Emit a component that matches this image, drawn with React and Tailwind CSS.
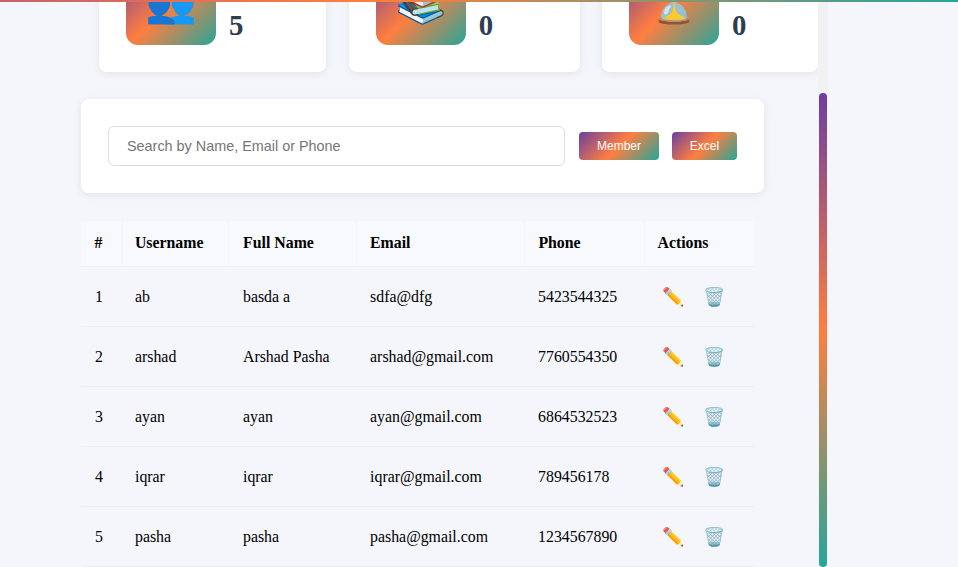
import React from 'react'

const GRAD = 'bg-[linear-gradient(135deg,#6b3fa0_0%,#ff7e3f_50%,#26a69a_100%)]'

const stats = [
  { icon: '👥', value: 5, width: 'w-[227.3px]' },
  { icon: '📚', value: 0, width: 'w-[231px]' },
  { icon: '⏳', value: 0, width: 'w-[216px]' },
]

const members = [
  { id: 1, username: 'ab', name: 'basda a', email: 'sdfa@dfg', phone: '5423544325' },
  { id: 2, username: 'arshad', name: 'Arshad Pasha', email: 'arshad@gmail.com', phone: '7760554350' },
  { id: 3, username: 'ayan', name: 'ayan', email: 'ayan@gmail.com', phone: '6864532523' },
  { id: 4, username: 'iqrar', name: 'iqrar', email: 'iqrar@gmail.com', phone: '789456178' },
  { id: 5, username: 'pasha', name: 'pasha', email: 'pasha@gmail.com', phone: '1234567890' },
]

const StatCard = ({ stat }) => (
  <div className={`${stat.width} h-[112px] bg-white rounded-[8px] shadow-[0_2px_8px_rgba(0,0,0,0.08)] pl-[27px] flex items-start gap-[13px]`}>
    <div className="w-[90px] h-[85px] rounded-[12px] bg-[linear-gradient(135deg,#6b3fa0_0%,#ff7e3f_50%,#26a69a_100%)] flex items-center justify-center text-[41.6px]">
      {stat.icon}
    </div>
    <div className="mt-[49px] text-[28.8px] leading-[32px] font-bold text-[#2c3e50]">{stat.value}</div>
  </div>
)

const App = () => {
  return (
    <div className="h-[567px] overflow-hidden bg-[#f4f6fb] font-['Liberation_Serif',serif]">
      {/* top gradient line */}
      <div className="relative z-10 h-[2px] bg-[linear-gradient(90deg,#c4636c_0%,#ff7e3f_38%,#26a69a_100%)]"></div>

      <div className="flex h-[565px]">
        <div className="w-[818px] overflow-hidden">
          {/* stat cards run off the top of the view */}
          <div className="-mt-[42px] pl-[99px] flex gap-[22.4px]">
            {stats.map((stat, i) => <StatCard key={i} stat={stat} />)}
          </div>

          {/* search */}
          <div className="mt-[27px] ml-[81px] w-[683px] h-[94px] bg-white rounded-[8px] shadow-[0_2px_8px_rgba(0,0,0,0.08)] pl-[27px] flex items-center">
            <input
              placeholder="Search by Name, Email or Phone"
              className="w-[457px] h-[40px] border border-[#dddddd] rounded-[6px] px-[18px] text-[14.4px] font-['Liberation_Sans',sans-serif] placeholder:text-[#757575] bg-white"
            />
            <button className={`ml-[14px] w-[80px] h-[28px] rounded-[4px] ${GRAD} text-white text-[12px] font-['Liberation_Sans',sans-serif]`}>Member</button>
            <button className={`ml-[13px] w-[65px] h-[28px] rounded-[4px] ${GRAD} text-white text-[12px] font-['Liberation_Sans',sans-serif]`}>Excel</button>
          </div>

          {/* members table */}
          <table className="mt-[28px] ml-[81px] w-[673px] table-fixed border-collapse text-[15.84px] text-black">
            <colgroup>
              <col className="w-[41px]" />
              <col className="w-[106px]" />
              <col className="w-[128.5px]" />
              <col className="w-[168px]" />
              <col className="w-[119.5px]" />
              <col className="w-[110px]" />
            </colgroup>
            <thead>
              <tr className="h-[45px] bg-[#f8f9fc] border-b border-[#eeeff3] text-left">
                <th className="pl-[13.5px] font-bold border-r border-[#f3f4f8]">#</th>
                <th className="pl-[12.4px] font-bold border-r border-[#f3f4f8]">Username</th>
                <th className="pl-[14.6px] font-bold border-r border-[#f3f4f8]">Full Name</th>
                <th className="pl-[13px] font-bold border-r border-[#f3f4f8]">Email</th>
                <th className="pl-[13.4px] font-bold border-r border-[#f3f4f8]">Phone</th>
                <th className="pl-[13px] font-bold">Actions</th>
              </tr>
            </thead>
            <tbody>
              {members.map((m) => (
                <tr key={m.id} className="h-[60px] border-b border-[#eeeff3]">
                  <td className="pl-[14px] pt-[2px]">{m.id}</td>
                  <td className="pl-[13px] pt-[2px]">{m.username}</td>
                  <td className="pl-[15px] pt-[2px]">{m.name}</td>
                  <td className="pl-[13.6px] pt-[2px]">{m.email}</td>
                  <td className="pl-[13.6px] pt-[2px]">{m.phone}</td>
                  <td className="pl-[18px] pt-[2px]">
                    <div className="flex items-center gap-[18.5px] text-[18px]">
                      <span>✏️</span>
                      <span>🗑️</span>
                    </div>
                  </td>
                </tr>
              ))}
            </tbody>
          </table>
        </div>

        {/* custom scrollbar */}
        <div className="w-[10px] h-full bg-[#f1f1f1] flex flex-col items-center">
          <div className="h-[91px]"></div>
          <div className="w-[8px] flex-1 rounded-[4px] bg-[linear-gradient(180deg,#6b3fa0_0%,#ff7e3f_50%,#26a69a_100%)]"></div>
        </div>
      </div>
    </div>
  )
}

export default App
